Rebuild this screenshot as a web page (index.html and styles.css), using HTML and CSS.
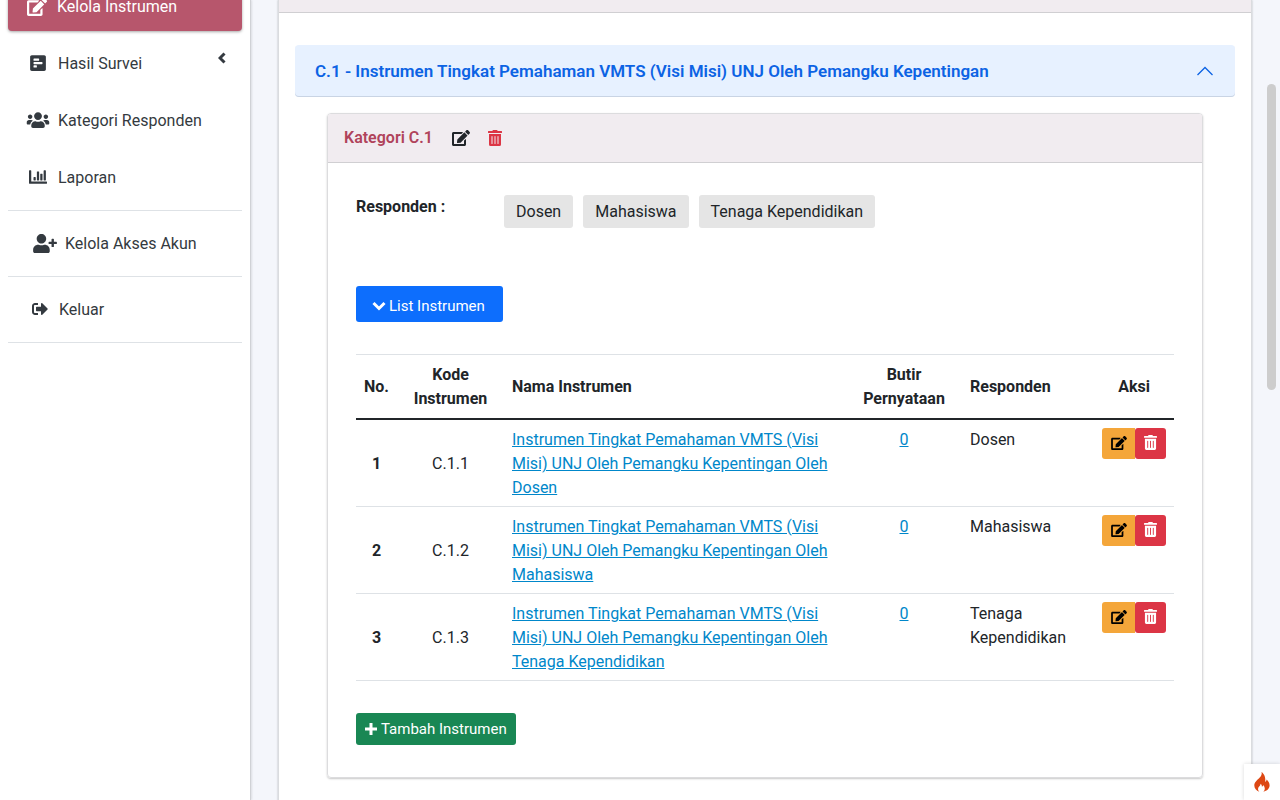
FILE: index.html
```html
<!DOCTYPE html>
<html lang="id">
<head>
<meta charset="utf-8">
<meta name="viewport" content="width=device-width, initial-scale=1">
<title>Kelola Instrumen</title>
<link rel="stylesheet" href="styles.css">
</head>
<body>
<svg class="sprite" aria-hidden="true">
  <symbol id="edit" viewBox="0 0 576 512"><path d="M402.6 83.2l90.2 90.2c3.8 3.8 3.8 10 0 13.8L274.4 405.6l-92.8 10.3c-12.4 1.4-22.9-9.1-21.5-21.5l10.3-92.8L388.8 83.2c3.8-3.8 10-3.8 13.8 0zm162-22.9l-48.8-48.8c-15.2-15.2-39.9-15.2-55.2 0l-35.4 35.4c-3.8 3.8-3.8 10 0 13.8l90.2 90.2c3.8 3.8 10 3.8 13.8 0l35.4-35.4c15.2-15.3 15.2-40 0-55.2zM384 346.2V448H64V128h229.8c3.2 0 6.2-1.3 8.5-3.5l40-40c7.6-7.6 2.2-20.5-8.5-20.5H48C21.5 64 0 85.5 0 112v352c0 26.5 21.5 48 48 48h352c26.5 0 48-21.5 48-48V306.2c0-10.7-12.9-16-20.5-8.5l-40 40c-2.2 2.3-3.5 5.3-3.5 8.5z"/></symbol>
  <symbol id="trash" viewBox="0 0 448 512"><path d="M32 464a48 48 0 0 0 48 48h288a48 48 0 0 0 48-48V128H32zm272-256a16 16 0 0 1 32 0v224a16 16 0 0 1-32 0zm-96 0a16 16 0 0 1 32 0v224a16 16 0 0 1-32 0zm-96 0a16 16 0 0 1 32 0v224a16 16 0 0 1-32 0zM432 32H312l-9.4-18.7A24 24 0 0 0 281.1 0H166.8a23.72 23.72 0 0 0-21.4 13.3L136 32H16A16 16 0 0 0 0 48v32a16 16 0 0 0 16 16h416a16 16 0 0 0 16-16V48a16 16 0 0 0-16-16z"/></symbol>
</svg>
<div class="app">
  <nav class="sidebar">
    <a class="item active" href="#"><svg class="ico i-edit"><use href="#edit"/></svg><span>Kelola Instrumen</span></a>
    <a class="item" href="#"><svg class="ico i-nav" viewBox="0 0 448 512"><path fill-rule="evenodd" d="M48 32h352c26.500 0 48 21.500 48 48v352c0 26.500-21.500 48-48 48H48c-26.500 0-48-21.500-48-48V80c0-26.500 21.500-48 48-48zM112 128a16 16 0 0 0-16 16v32a16 16 0 0 0 16 16h128a16 16 0 0 0 16-16v-32a16 16 0 0 0-16-16zm0 96a16 16 0 0 0-16 16v32a16 16 0 0 0 16 16h224a16 16 0 0 0 16-16v-32a16 16 0 0 0-16-16zm0 96a16 16 0 0 0-16 16v32a16 16 0 0 0 16 16h64a16 16 0 0 0 16-16v-32a16 16 0 0 0-16-16z"/></svg><span>Hasil Survei</span><svg class="caret" viewBox="0 0 8 12"><path d="M6.500 1.500L2 6l4.500 4.500"/></svg></a>
    <a class="item" href="#"><svg class="ico i-users" viewBox="0 0 640 512"><path d="M96 224c35.300 0 64-28.700 64-64s-28.700-64-64-64-64 28.700-64 64 28.700 64 64 64zm448 0c35.300 0 64-28.700 64-64s-28.700-64-64-64-64 28.700-64 64 28.700 64 64 64zm32 32h-64c-17.600 0-33.500 7.100-45.100 18.600 40.300 22.100 68.900 62 75.100 109.400h66c17.700 0 32-14.300 32-32v-32c0-35.300-28.700-64-64-64zm-256 0c61.900 0 112-50.100 112-112S381.900 32 320 32 208 82.100 208 144s50.100 112 112 112zm76.800 32h-8.300c-20.800 10-43.900 16-68.500 16s-47.600-6-68.500-16h-8.300C179.600 288 128 339.600 128 403.200V432c0 26.500 21.500 48 48 48h288c26.500 0 48-21.500 48-48v-28.800c0-63.600-51.600-115.200-115.200-115.200zm-223.700-13.400C161.500 263.100 145.600 256 128 256H64c-35.300 0-64 28.700-64 64v32c0 17.700 14.300 32 32 32h65.900c6.300-47.400 34.900-87.300 75.200-109.400z"/></svg><span>Kategori Responden</span></a>
    <a class="item" href="#"><svg class="ico i-nav" viewBox="0 0 512 512"><path d="M12 64h40q12 0 12 12v308h436q12 0 12 12v40q0 12-12 12H24q-24 0-24-24V76q0-12 12-12zM141 256h38q13 0 13 13v70q0 13-13 13h-38q-13 0-13-13v-70q0-13 13-13zM237 96h38q13 0 13 13v230q0 13-13 13h-38q-13 0-13-13V109q0-13 13-13zM333 160h38q13 0 13 13v166q0 13-13 13h-38q-13 0-13-13V173q0-13 13-13zM429 64h38q13 0 13 13v262q0 13-13 13h-38q-13 0-13-13V77q0-13 13-13z"/></svg><span>Laporan</span></a>
    <hr>
    <a class="item" href="#"><svg class="ico i-plus" viewBox="0 0 640 512"><path d="M624 208h-64v-64c0-8.800-7.200-16-16-16h-32c-8.800 0-16 7.200-16 16v64h-64c-8.800 0-16 7.200-16 16v32c0 8.800 7.200 16 16 16h64v64c0 8.800 7.200 16 16 16h32c8.800 0 16-7.200 16-16v-64h64c8.800 0 16-7.200 16-16v-32c0-8.800-7.200-16-16-16zm-400 48c70.700 0 128-57.300 128-128S294.700 0 224 0 96 57.300 96 128s57.300 128 128 128zm89.600 32h-16.700c-22.200 10.200-46.900 16-72.900 16s-50.600-5.800-72.900-16h-16.700C60.200 288 0 348.200 0 422.400V464c0 26.500 21.500 48 48 48h352c26.500 0 48-21.500 48-48v-41.600c0-74.200-60.200-134.400-134.400-134.400z"/></svg><span>Kelola Akses Akun</span></a>
    <hr>
    <a class="item" href="#"><svg class="ico i-exit" viewBox="0 0 512 512"><path d="M497 273L329 441c-15 15-41 4.500-41-17v-96H152c-13.300 0-24-10.700-24-24v-96c0-13.300 10.700-24 24-24h136V88c0-21.400 25.900-32 41-17l168 168c9.300 9.400 9.300 24.600 0 34zM192 436v-40c0-6.600-5.400-12-12-12H96c-17.700 0-32-14.300-32-32V160c0-17.700 14.300-32 32-32h84c6.600 0 12-5.400 12-12V76c0-6.600-5.400-12-12-12H96c-53 0-96 43-96 96v192c0 53 43 96 96 96h84c6.600 0 12-5.400 12-12z"/></svg><span>Keluar</span></a>
    <hr>
  </nav>
  <main class="main">
    <section class="panel">
      <div class="panel-head"></div>
      <div class="panel-body">
        <button class="accordion" type="button" aria-expanded="true"><span>C.1 - Instrumen Tingkat Pemahaman VMTS (Visi Misi) UNJ Oleh Pemangku Kepentingan</span><svg class="chev" viewBox="0 0 20 20"><path d="M2.500 14L10 6.500l7.500 7.500"/></svg></button>
        <section class="card">
          <header class="card-head">
            <h2>Kategori C.1</h2>
            <a class="tool" href="#" aria-label="Edit kategori"><svg class="ico i-tool-edit"><use href="#edit"/></svg></a>
            <a class="tool red" href="#" aria-label="Hapus kategori"><svg class="ico i-tool-trash"><use href="#trash"/></svg></a>
          </header>
          <div class="card-body">
            <div class="resp">
              <strong>Responden :</strong>
              <div class="tags"><span>Dosen</span><span>Mahasiswa</span><span>Tenaga Kependidikan</span></div>
            </div>
            <button class="btn blue" type="button"><svg class="down" viewBox="0 0 14 10"><path d="M1.500 2L7 7.500 12.500 2"/></svg>List Instrumen</button>
            <table>
              <thead><tr><th class="c-no">No.</th><th class="c-kode">Kode Instrumen</th><th class="left">Nama Instrumen</th><th class="c-butir">Butir Pernyataan</th><th class="c-resp left">Responden</th><th class="c-aksi">Aksi</th></tr></thead>
              <tbody>
                <tr><th scope="row">1</th><td class="mid">C.1.1</td><td><a href="#">Instrumen Tingkat Pemahaman VMTS (Visi Misi) UNJ Oleh Pemangku Kepentingan Oleh Dosen</a></td><td class="num"><a href="#">0</a></td><td>Dosen</td><td><div class="acts"><button class="edit" type="button" aria-label="Edit"><svg class="ico i-row-edit"><use href="#edit"/></svg></button><button class="del" type="button" aria-label="Hapus"><svg class="ico i-row-trash"><use href="#trash"/></svg></button></div></td></tr>
                <tr><th scope="row">2</th><td class="mid">C.1.2</td><td><a href="#">Instrumen Tingkat Pemahaman VMTS (Visi Misi) UNJ Oleh Pemangku Kepentingan Oleh Mahasiswa</a></td><td class="num"><a href="#">0</a></td><td>Mahasiswa</td><td><div class="acts"><button class="edit" type="button" aria-label="Edit"><svg class="ico i-row-edit"><use href="#edit"/></svg></button><button class="del" type="button" aria-label="Hapus"><svg class="ico i-row-trash"><use href="#trash"/></svg></button></div></td></tr>
                <tr><th scope="row">3</th><td class="mid">C.1.3</td><td><a href="#">Instrumen Tingkat Pemahaman VMTS (Visi Misi) UNJ Oleh Pemangku Kepentingan Oleh Tenaga Kependidikan</a></td><td class="num"><a href="#">0</a></td><td>Tenaga Kependidikan</td><td><div class="acts"><button class="edit" type="button" aria-label="Edit"><svg class="ico i-row-edit"><use href="#edit"/></svg></button><button class="del" type="button" aria-label="Hapus"><svg class="ico i-row-trash"><use href="#trash"/></svg></button></div></td></tr>
              </tbody>
            </table>
            <button class="btn green" type="button"><svg class="plus" viewBox="0 0 14 14"><path d="M7 1v12M1 7h12"/></svg>Tambah Instrumen</button>
          </div>
        </section>
      </div>
    </section>
  </main>
</div>
<div class="scroll-thumb"></div>
<button class="debug" type="button" aria-label="Debug"><svg viewBox="0 0 16 20"><path d="M7.500 0c.7 2.300-.2 3.900-2 5.800C3 8.400.3 10.300.3 13.600c0 3 2 5.200 5 6.200-1.600-1.500-1.700-3.600-.2-5.200.9-.9 1.500-1.600 1.300-2.900 1.100.6 1.700 1.700 1.400 2.900.9-.2 1.400-.8 1.500-1.600 1.900 2 2.100 4.900.1 6.700 3.600-.7 6.200-3.100 6.200-6.400 0-2.600-1.500-3.900-2.900-5.700-.3 1.300-.7 2-1.500 2.300C11.800 6.300 10.600 2 7.500 0z"/></svg></button>
</body>
</html>
```
FILE: styles.css
```css
* { box-sizing: border-box; }
body {
  margin: 0;
  height: 100vh;
  overflow: hidden;
  background: #f4f6fb;
  color: #212529;
  font-family: Roboto, "Noto Sans", sans-serif;
  font-size: 16px;
  line-height: 24px;
}
button { font: inherit; border: 0; cursor: pointer; }
.sprite { display: none; }
.ico { display: block; flex: none; fill: currentColor; }
.i-edit { width: 20px; height: 18px; margin: 0 10px 0 3px; }
.i-nav { width: 18px; height: 18px; margin: 0 11px 2px 5px; }
.i-users { width: 24px; height: 18px; margin: 0 8px 2px 2px; }
.i-plus { width: 24px; height: 19px; margin: 0 8px 2px 9px; }
.i-exit { width: 16px; height: 16px; margin: 0 11px 2px 8px; }
.i-tool-edit { width: 18px; height: 16px; }
.i-tool-trash { width: 14px; height: 16px; }
.i-row-edit { width: 16px; height: 14px; }
.i-row-trash { width: 13px; height: 15px; }

.app { display: flex; height: 100vh; }
.sidebar {
  flex: 0 0 251px;
  display: flex;
  flex-direction: column;
  gap: 9px;
  padding: 0 8px;
  background: #fff;
  border-right: 1px solid #d0d2d6;
  box-shadow: 1px 0 2px rgba(0, 0, 0, .1);
}
.item {
  flex: none;
  display: flex;
  align-items: center;
  height: 48px;
  padding: 0 16px;
  border-radius: 4px;
  color: #343a40;
  text-decoration: none;
}
.active {
  margin-top: -17px;
  background: #b7566c;
  color: #fff;
  box-shadow: 0 1px 3px rgba(0, 0, 0, .35);
}
.caret { width: 8px; height: 12px; margin: 0 0 12px auto; }
.caret path, .down path, .plus path, .chev path { fill: none; stroke: currentColor; stroke-width: 3; }
.sidebar hr {
  flex: none;
  width: 100%;
  height: 1px;
  margin: -1px 0 0;
  border: 0;
  background: #dee2e6;
}

.main { flex: 1; min-width: 0; padding: 0 28px 0 27px; }
.panel {
  min-height: 100%;
  background: #fff;
  border: solid #dadcdf;
  border-width: 0 1px;
  box-shadow: 0 0 2px rgba(0, 0, 0, .25);
}
.panel-head { height: 13px; background: #f1ecf0; border-bottom: 1px solid #d0cfd2; }
.panel-body { padding: 32px 16px; }
.accordion {
  display: flex;
  align-items: center;
  justify-content: space-between;
  width: 100%;
  height: 52px;
  padding: 0 20px;
  border-radius: 4px;
  background: #e7f1ff;
  box-shadow: inset 0 -1px 0 #c9d4e4;
  color: #0c63e4;
  font-size: 17px;
  font-weight: 600;
  text-align: left;
}
.chev { width: 20px; height: 20px; }
.chev path { stroke-width: 1.300; }
.card {
  margin: 16px 32px 0;
  border: 1px solid #dcdcde;
  border-radius: 4px;
  box-shadow: 0 1px 2px rgba(0, 0, 0, .22);
}
.card-head {
  display: flex;
  align-items: center;
  height: 49px;
  padding: 0 16px;
  background: #f1ecf0;
  border-bottom: 1px solid #d0cfd2;
  border-radius: 3px 3px 0 0;
}
.card-head h2 { margin: 0; font-size: 16px; font-weight: 600; color: #b0435b; }
.tool { margin-left: 19px; color: #212529; }
.tool.red { margin-left: 18px; color: #dc3545; }
.card-body { padding: 32px 28px; }
.resp { display: flex; height: 33px; }
.resp strong { width: 148px; font-weight: 700; }
.tags { display: flex; gap: 10px; }
.tags span { padding: 5px 12px 4px; background: #e5e5e5; border-radius: 3px; }
.btn {
  display: flex;
  align-items: center;
  gap: 3px;
  border-radius: 3px;
  color: #fff;
  font-size: 15px;
}
.blue { height: 36px; margin-top: 58px; padding: 3px 18px 0 16px; background: #0d6efd; }
.green { height: 32px; padding: 0 9px 0 8px; background: #198754; }
.down { width: 14px; height: 10px; }
.plus { width: 14px; height: 14px; }

table { width: 100%; margin: 32px 0; border-collapse: separate; border-spacing: 0; table-layout: fixed; }
th { font-weight: 700; text-align: center; }
thead th { padding: 8px 8px 7px; border-top: 1px solid #dee2e6; border-bottom: 2px solid #212529; }
tbody th, td { padding: 8px 8px 6px; border-bottom: 1px solid #dee2e6; vertical-align: top; }
tbody th, .mid { vertical-align: middle; text-align: center; }
.num { text-align: center; }
thead .left { text-align: left; }
td a { color: #0087ca; }
.c-no { width: 41px; }
.c-kode { width: 107px; }
.c-butir { width: 116px; }
.c-resp { width: 132px; }
.c-aksi { width: 80px; }
.acts { display: flex; }
.acts button { display: flex; align-items: center; justify-content: center; height: 31px; padding: 0 0 2px; }
.edit { width: 33px; background: #f4a63a; color: #000; border-radius: 3px 0 0 3px; }
.del { width: 31px; background: #dc3545; color: #fff; border-radius: 3px; }

.scroll-thumb { position: fixed; top: 84px; right: 4px; width: 9px; height: 306px; border-radius: 5px; background: #cdcdcd; }
.debug { position: fixed; right: 0; bottom: 0; width: 36px; height: 36px; padding: 8px 10px; background: #fff; box-shadow: 0 0 4px rgba(0, 0, 0, .15); }
.debug svg { display: block; width: 16px; height: 20px; fill: #dd4814; }
```
